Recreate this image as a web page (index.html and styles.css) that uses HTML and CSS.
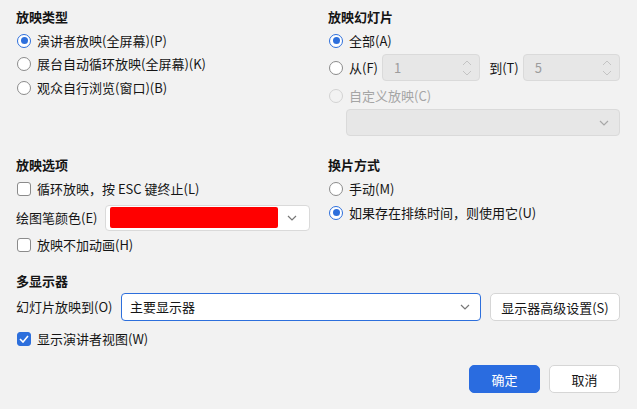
FILE: index.html
```html
<!DOCTYPE html>
<html lang="zh">
<head>
<meta charset="utf-8">
<link rel="stylesheet" href="styles.css">
</head>
<body>
<div class="dialog">
  <div class="grid sec1">
    <div class="col">
      <div class="title">放映类型</div>
      <div class="row r1"><span class="radio on"></span><span>演讲者放映(全屏幕)(P)</span></div>
      <div class="row r1"><span class="radio"></span><span>展台自动循环放映(全屏幕)(K)</span></div>
      <div class="row r1"><span class="radio"></span><span>观众自行浏览(窗口)(B)</span></div>
    </div>
    <div class="col">
      <div class="title">放映幻灯片</div>
      <div class="row r1"><span class="radio on"></span><span>全部(A)</span></div>
      <div class="row rfrom">
        <span class="radio"></span><span class="lbl-from">从(F)</span>
        <div class="spin"><span>1</span>
          <svg class="arrows" width="12" height="18" viewBox="0 0 12 18"><path d="M2 6 L6 2 L10 6 M2 12 L6 16 L10 12" fill="none" stroke="#c4c4c4" stroke-width="1"/></svg>
        </div>
        <span class="lbl-to">到(T)</span>
        <div class="spin"><span>5</span>
          <svg class="arrows" width="12" height="18" viewBox="0 0 12 18"><path d="M2 6 L6 2 L10 6 M2 12 L6 16 L10 12" fill="none" stroke="#c4c4c4" stroke-width="1"/></svg>
        </div>
      </div>
      <div class="row r1 disabled"><span class="radio dis"></span><span>自定义放映(C)</span></div>
      <div class="select dis-select">
        <span></span>
        <svg class="chev" width="10" height="6" viewBox="0 0 10 6"><path d="M1 1 L5 5 L9 1" fill="none" stroke="#a8a8a8" stroke-width="1.2"/></svg>
      </div>
    </div>
  </div>

  <div class="grid sec2">
    <div class="col">
      <div class="title">放映选项</div>
      <div class="row r2"><span class="check"></span><span>循环放映，按 ESC 键终止(L)</span></div>
      <div class="row rcolor">
        <span class="lbl-color">绘图笔颜色(E)</span>
        <div class="select color-select">
          <span class="swatch"></span>
          <svg class="chev" width="10" height="6" viewBox="0 0 10 6"><path d="M1 1 L5 5 L9 1" fill="none" stroke="#777" stroke-width="1.2"/></svg>
        </div>
      </div>
      <div class="row r2"><span class="check"></span><span>放映不加动画(H)</span></div>
    </div>
    <div class="col">
      <div class="title">换片方式</div>
      <div class="row r2"><span class="radio"></span><span>手动(M)</span></div>
      <div class="row r2b"><span class="radio on"></span><span>如果存在排练时间，则使用它(U)</span></div>
    </div>
  </div>

  <div class="sec3">
    <div class="title">多显示器</div>
    <div class="row rmon">
      <span class="lbl-mon">幻灯片放映到(O)</span>
      <div class="select mon-select">
        <span>主要显示器</span>
        <svg class="chev" width="10" height="6" viewBox="0 0 10 6"><path d="M1 1 L5 5 L9 1" fill="none" stroke="#777" stroke-width="1.2"/></svg>
      </div>
      <button class="btn adv">显示器高级设置(S)</button>
    </div>
    <div class="row rpres"><span class="check on"><svg width="10" height="8" viewBox="0 0 10 8"><path d="M1 4 L4 7 L9 1" fill="none" stroke="#fff" stroke-width="1.6"/></svg></span><span>显示演讲者视图(W)</span></div>
  </div>

  <div class="footer">
    <button class="btn primary">确定</button>
    <button class="btn cancel">取消</button>
  </div>
</div>
</body>
</html>
```

FILE: styles.css
```css
* { box-sizing: border-box; }
html, body { margin: 0; padding: 0; }
body {
  background: #f2f2f2;
  font-family: "Noto Sans CJK SC", "Microsoft YaHei", "Noto Sans", sans-serif;
  font-size: 13px;
  color: #151515;
  width: 637px;
  height: 409px;
  overflow: hidden;
}
.dialog {
  padding: 7px 17px 0 16px;
}
.grid {
  display: grid;
  grid-template-columns: 312px 292px;
}
.sec1 { height: 131px; }
.sec2 { margin-top: 17px; height: 101px; }
.sec3 { margin-top: 15px; }

.col { display: flex; flex-direction: column; }
.title {
  font-weight: 700;
  height: 20px;
  line-height: 20px;
}
.row {
  display: flex;
  align-items: center;
  line-height: 18px;
  white-space: nowrap;
}
.r1 { height: 23.5px; }
.col .title + .r1 { margin-top: 2px; }
.r2 { height: 24px; }
.col .title + .r2 { margin-top: 2px; }
.r2b { height: 23px; }

.radio {
  width: 14px; height: 14px;
  border-radius: 50%;
  border: 1px solid #8b8b8b;
  background: #fff;
  margin: 0 6px 0 1px;
  flex: none;
  position: relative;
}
.radio.on { border-color: #2d6fdc; }
.radio.on::after {
  content: "";
  position: absolute;
  left: 2.5px; top: 2.5px;
  width: 7px; height: 7px;
  border-radius: 50%;
  background: #2d6fdc;
}
.radio.dis { border-color: #d3d3d3; background: #f2f2f2; }
.disabled { color: #a5a5a5; }

.check {
  width: 14px; height: 14px;
  border: 1px solid #8b8b8b;
  border-radius: 3px;
  background: #fff;
  margin: 0 6px 0 1px;
  flex: none;
  display: flex; align-items: center; justify-content: center;
}
.check.on { background: #2d6fdc; border-color: #2d6fdc; }

.rfrom { height: 28px; margin-top: 1px; }
.lbl-from { margin-right: 4px; }
.spin {
  width: 100px; height: 27px;
  background: #e7e7e7;
  border: 1px solid #dadada;
  border-radius: 4px;
  display: flex; align-items: center; justify-content: space-between;
  padding: 0 6px 0 11px;
  color: #9c9c9c;
}
.lbl-to { margin: 0 4px 0 9px; }
.rfrom .spin:last-child { width: 99px; }
.rfrom + .r1 { margin-top: 3px; }

.select {
  display: flex; align-items: center; justify-content: space-between;
  background: #fff;
  border: 1px solid #dadada;
  border-radius: 4px;
  height: 27px;
}
.chev { flex: none; }
.dis-select {
  margin-left: 18px;
  width: 274px;
  background: #e7e7e7;
  margin-top: 1px;
  padding-right: 10px;
}
.rcolor { height: 31px; margin-top: 1px; }
.lbl-color { width: 89px; }
.color-select {
  width: 205px; height: 26px;
  padding: 2px 12px 2px 4px;
}
.swatch {
  width: 168px; height: 21px;
  background: #ff0000;
  border-radius: 2px;
}

.rmon { height: 28px; margin-top: 2px; }
.lbl-mon { width: 105px; }
.mon-select {
  width: 360px; height: 28px;
  border-color: #2d6fdc;
  padding: 0 10px 0 8px;
}
.btn {
  font-family: inherit;
  font-size: 13px;
  color: #151515;
  background: #fff;
  border: 1px solid #d6d6d6;
  border-radius: 5px;
  padding: 0;
  height: 28px;
}
.adv { width: 130px; margin-left: 9px; }
.rpres { height: 24px; margin-top: 6px; }

.footer {
  display: flex;
  justify-content: flex-end;
  gap: 9px;
  margin-top: 14px;
}
.primary {
  width: 71px; height: 28px;
  background: #2a6ce0;
  border-color: #2a6ce0;
  color: #fff;
}
.cancel { width: 71px; height: 28px; }
```
